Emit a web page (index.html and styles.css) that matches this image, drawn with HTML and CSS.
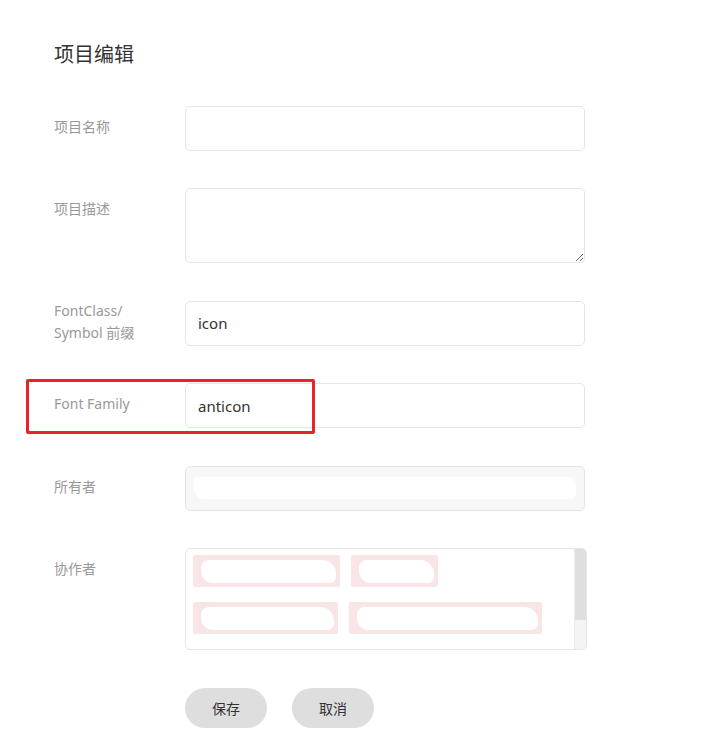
FILE: index.html
```html
<!DOCTYPE html>
<html lang="zh">
<head>
<meta charset="utf-8">
<title>项目编辑</title>
<link rel="stylesheet" href="styles.css">
</head>
<body>
<div class="page">
  <h1 class="title">项目编辑</h1>
  <form class="form">
    <div class="row">
      <label class="label">项目名称</label>
      <input class="input" type="text" value="">
    </div>
    <div class="row">
      <label class="label">项目描述</label>
      <textarea class="textarea"></textarea>
    </div>
    <div class="row row-center">
      <label class="label label-two">FontClass/<br>Symbol 前缀</label>
      <input class="input" type="text" value="icon">
    </div>
    <div class="row row-mark">
      <label class="label">Font Family</label>
      <input class="input" type="text" value="anticon">
      <div class="highlight"></div>
    </div>
    <div class="row">
      <label class="label">所有者</label>
      <div class="input input-disabled"><span class="redact-bar"></span></div>
    </div>
    <div class="row">
      <label class="label">协作者</label>
      <div class="collab">
        <div class="tags">
          <span class="tag tag-a"><span class="blob"></span></span>
          <span class="tag tag-b"><span class="blob"></span></span>
          <span class="tag tag-c"><span class="blob"></span></span>
          <span class="tag tag-d"><span class="blob"></span></span>
        </div>
        <div class="scrollbar"><div class="scroll-thumb"></div></div>
      </div>
    </div>
    <div class="actions">
      <button type="button" class="btn">保存</button>
      <button type="button" class="btn">取消</button>
    </div>
  </form>
</div>
</body>
</html>
```

FILE: styles.css
```css
* { box-sizing: border-box; }
html, body { margin: 0; padding: 0; background: #fff; }
body {
  font-family: "Noto Sans", "Noto Sans CJK SC", sans-serif;
  color: #333;
}
.page {
  padding: 41px 0 0 54px;
  width: 725px;
}
.title {
  margin: 0;
  font-size: 20px;
  line-height: 28px;
  font-weight: normal;
  color: #333;
}
.form {
  margin-top: 37px;
  display: flex;
  flex-direction: column;
  gap: 37.4px;
}
.row {
  display: flex;
  align-items: flex-start;
  position: relative;
}
.row-center { align-items: center; }
.label {
  width: 131px;
  flex: none;
  font-size: 14px;
  line-height: 22px;
  padding-top: 10px;
  color: #999;
}
.label-two { padding-top: 0; margin-top: -2px; }
.input {
  width: 400px;
  height: 45px;
  border: 1px solid #e5e5e5;
  border-radius: 5px;
  padding: 0 12px;
  font-family: "Noto Sans", "Noto Sans CJK SC", sans-serif;
  font-size: 15px;
  color: #333;
  outline: none;
  background: #fff;
}
.input-disabled {
  background: #f7f7f7;
  display: flex;
  align-items: center;
  padding: 0 8px;
}
.redact-bar {
  display: block;
  width: 382px;
  height: 22px;
  background: #fff;
  border-radius: 3px 8px 6px 10px;
}
.textarea {
  width: 400px;
  height: 75px;
  border: 1px solid #e5e5e5;
  border-radius: 5px;
  padding: 8px 12px;
  font-family: "Noto Sans", "Noto Sans CJK SC", sans-serif;
  font-size: 15px;
  resize: vertical;
  outline: none;
  display: block;
}
.highlight {
  position: absolute;
  left: -28px;
  top: -4px;
  width: 289px;
  height: 55px;
  border: 3px solid #e8232b;
  border-radius: 2px;
  pointer-events: none;
}
.collab {
  position: relative;
  width: 402px;
  height: 102px;
  border: 1px solid #e5e5e5;
  border-radius: 5px;
  overflow: hidden;
  padding: 6px 7px;
}
.scrollbar {
  position: absolute;
  top: 0;
  right: 0;
  bottom: 0;
  width: 12px;
  background: #f4f4f4;
  border-left: 1px solid #ececec;
}
.scroll-thumb {
  height: 71px;
  background: #dfdfdf;
}
.tags {
  display: flex;
  flex-wrap: wrap;
  column-gap: 11px;
  row-gap: 15px;
  width: 360px;
  align-content: flex-start;
}
.tag {
  display: block;
  height: 32px;
  background: #f9e5e5;
  border-radius: 2px;
  padding: 5px 4px 4px 8px;
}
.blob {
  display: block;
  height: 100%;
  background: #fff;
  border-radius: 8px 14px 6px 12px;
}
.tag-a { width: 147px; }
.tag-b { width: 87px; }
.tag-c { width: 145px; }
.tag-d { width: 193px; }
.actions {
  display: flex;
  gap: 25px;
  margin-left: 131px;
  margin-top: 1px;
}
.btn {
  width: 82px;
  height: 40px;
  border: none;
  border-radius: 20px;
  background: #dedede;
  color: #333;
  font-family: "Noto Sans", "Noto Sans CJK SC", sans-serif;
  font-size: 14px;
  cursor: pointer;
}
```
